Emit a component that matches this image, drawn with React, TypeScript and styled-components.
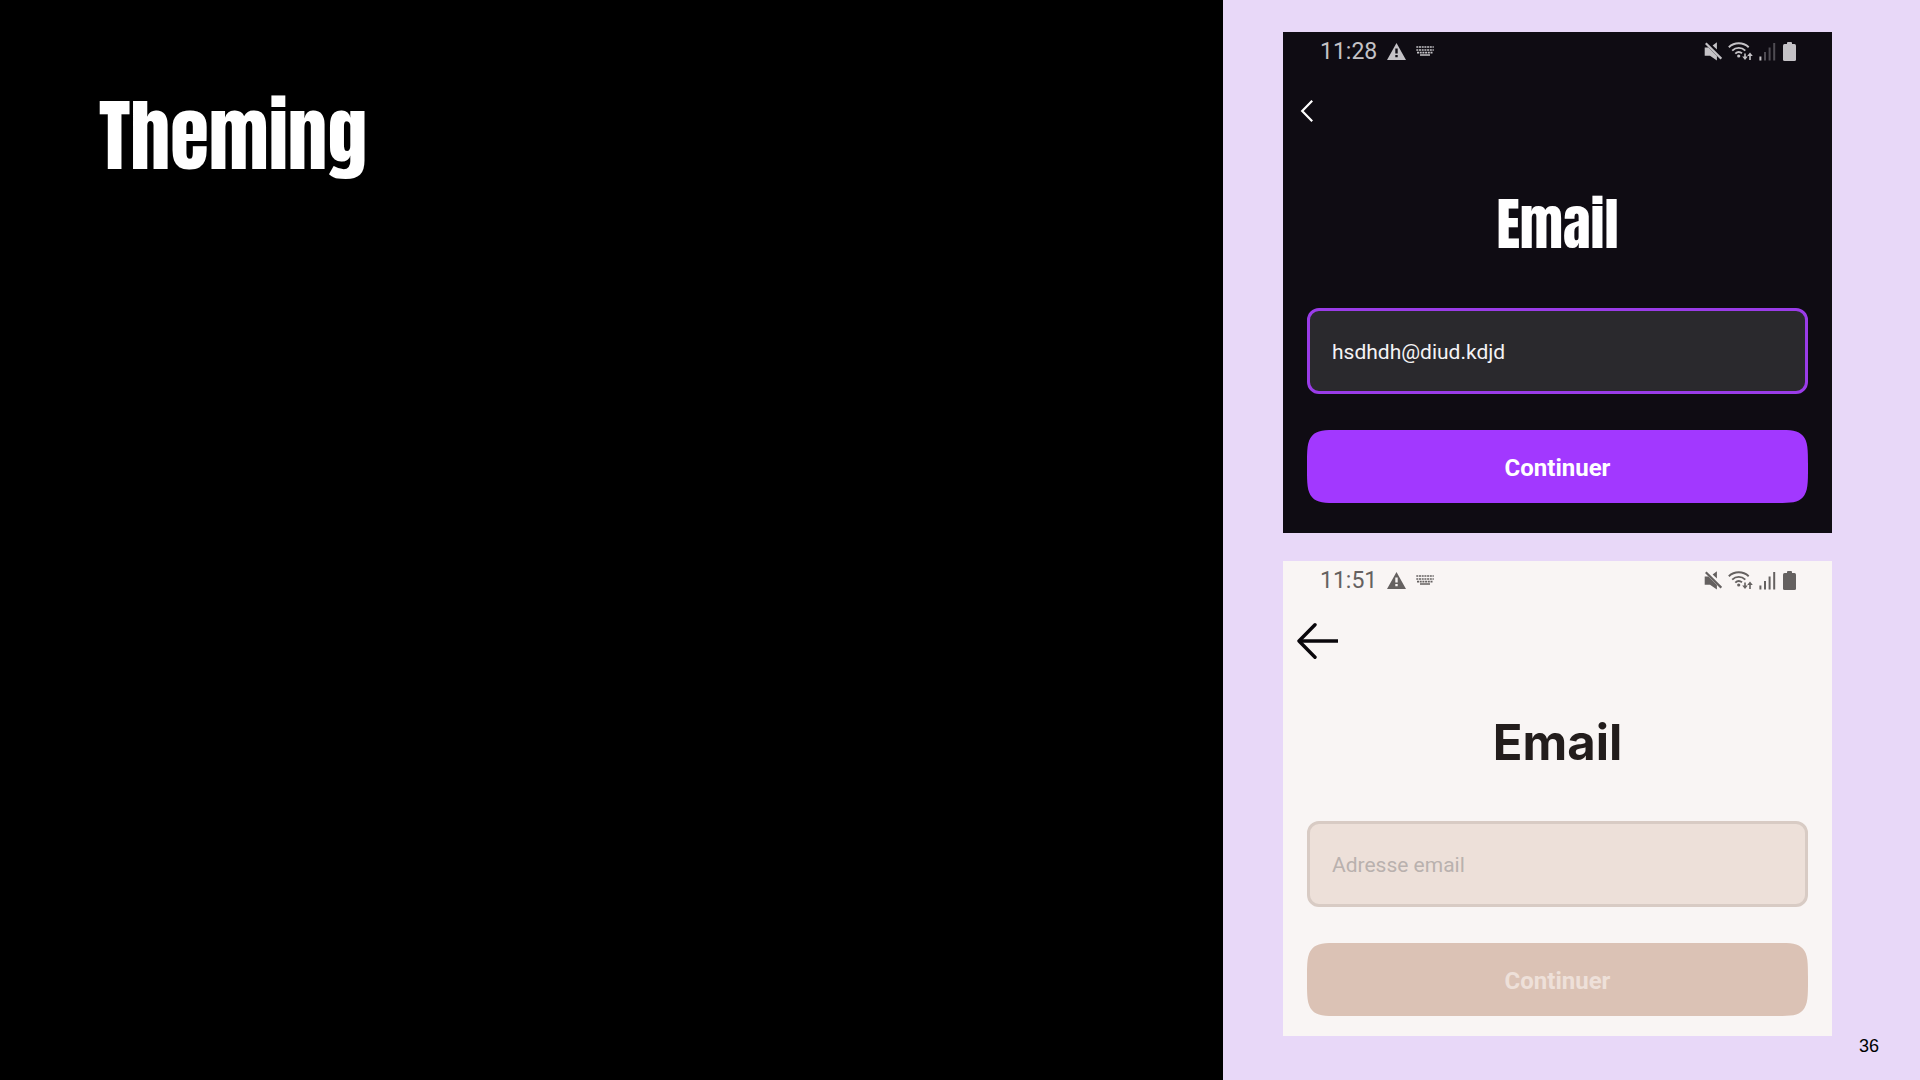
import React, { useId } from 'react';
import styled, { ThemeProvider, createGlobalStyle } from 'styled-components';

const GlobalStyle = createGlobalStyle`
  *, *::before, *::after { box-sizing: border-box; }
  body { margin: 0; background: #000; font-family: Roboto, "Liberation Sans", sans-serif; }
`;

const displayFont = 'Anton, "Roboto Condensed", Roboto, sans-serif';

const dark = {
  surface: '#0f0c13',
  status: '#c4c2c6',
  signalOff: '#4f4c53',
  nav: '#ffffff',
  title: '#ffffff',
  titleFont: displayFont,
  titleSize: '57px',
  titleWeight: 400,
  titleMargin: '32px 0 44px',
  field: '#2a292d',
  fieldBorder: '#9a3ce8',
  fieldText: '#f4f3f5',
  placeholder: '#8b8890',
  button: '#a238ff',
  buttonText: '#ffffff',
  bottom: '30px',
};

const light: typeof dark = {
  surface: '#f9f5f4',
  status: '#656160',
  signalOff: '#656160',
  nav: '#0a070b',
  title: '#231d1c',
  titleFont: 'Inter, Roboto, sans-serif',
  titleSize: '49px',
  titleWeight: 700,
  titleMargin: '22px 0 38px',
  field: '#ede0d9',
  fieldBorder: '#d8cbc4',
  fieldText: '#231d1c',
  placeholder: '#b9b1ae',
  button: '#dbc2b5',
  buttonText: '#eee0d9',
  bottom: '20px',
};

const Slide = styled.div`
  display: grid;
  grid-template-columns: 1223fr 697fr;
  min-height: 100vh;
`;

const Main = styled.main`
  background: #000;
  padding: 78px 99px;
`;

const Heading = styled.h1`
  margin: 0;
  color: #fff;
  font: 400 79px/116px ${displayFont};
`;

const Aside = styled.aside`
  display: flex;
  flex-direction: column;
  background: #e8d8f8;
  padding-top: 32px;
`;

const Screens = styled.div`
  display: flex;
  flex-direction: column;
  gap: 28px;
  padding: 0 88px 0 60px;
`;

const PageNumber = styled.footer`
  padding-right: 41px;
  color: #000;
  font: 18px/20px "Liberation Sans", Arial, sans-serif;
  text-align: right;
`;

const Screen = styled.section`
  position: relative;
  display: flex;
  flex-direction: column;
  background: ${p => p.theme.surface};
  padding-bottom: ${p => p.theme.bottom};
`;

const StatusBar = styled.div`
  display: flex;
  align-items: center;
  justify-content: space-between;
  height: 38px;
  padding: 0 36px 0 37px;
  color: ${p => p.theme.status};
  font-size: 23px;
  line-height: 28px;
`;

const StatusGroup = styled.div<{ $gap: number }>`
  display: flex;
  align-items: center;
  gap: ${p => p.$gap}px;

  svg { display: block; }
`;

const Clock = styled.time`
  padding-top: 2px;
`;

const Nav = styled.nav`
  display: flex;
  align-items: center;
  height: 82px;
  padding-left: 12px;
`;

const BackButton = styled.button`
  display: flex;
  padding: 0;
  border: 0;
  background: none;
  color: ${p => p.theme.nav};
  cursor: pointer;
`;

const Title = styled.h2`
  margin: ${p => p.theme.titleMargin};
  color: ${p => p.theme.title};
  font-family: ${p => p.theme.titleFont};
  font-size: ${p => p.theme.titleSize};
  font-weight: ${p => p.theme.titleWeight};
  line-height: 80px;
  text-align: center;
`;

const Form = styled.form`
  display: flex;
  flex-direction: column;
  gap: 36px;
  padding: 0 24px;
`;

const HiddenLabel = styled.label`
  position: absolute;
  width: 1px;
  height: 1px;
  overflow: hidden;
  white-space: nowrap;
  clip-path: inset(50%);
`;

const Field = styled.input`
  width: 100%;
  height: 86px;
  padding: 2px 22px 0;
  border: 3px solid ${p => p.theme.fieldBorder};
  border-radius: 12px;
  outline: 0;
  background: ${p => p.theme.field};
  color: ${p => p.theme.fieldText};
  font: 21px/28px Roboto, sans-serif;

  &::placeholder { color: ${p => p.theme.placeholder}; opacity: 1; }
`;

const Submit = styled.button`
  height: 73px;
  padding: 2px 0 0;
  border: 0;
  border-radius: 32px / 36px;
  corner-shape: squircle;
  background: ${p => p.theme.button};
  color: ${p => p.theme.buttonText};
  font: 700 24px/28px Roboto, sans-serif;
`;

const Warning = () => (
  <svg width="19" height="17" viewBox="0 0 19 17" aria-hidden="true">
    <path fillRule="evenodd" fill="currentColor" d="M9.5 0 19 17H0ZM8.3 5.5v5h2.4v-5ZM8.3 12v2.3h2.4V12Z" />
  </svg>
);

const Keyboard = () => (
  <svg width="18" height="10" viewBox="0 0 18 10" stroke="currentColor" aria-hidden="true">
    <path strokeWidth="1.6" strokeDasharray="2 .7" d="M.3 1H17.8M.3 4H17.8" />
    <path strokeWidth="1.6" strokeDasharray="2 .7" d="M1 6.6H17" />
    <path strokeWidth="1.5" d="M4 9H14" />
  </svg>
);

const Muted = () => (
  <svg width="18" height="19" viewBox="0 0 18 19" aria-hidden="true">
    <path fill="currentColor" d="M.7 5.6H4.4L12.9 14V18.4L6 13.800H.7ZM8.600 3.400 12.900.3V7.600Z" />
    <path stroke="currentColor" strokeWidth="2.200" d="M1.8 1.2 17.3 16.6" />
  </svg>
);

const Wifi = () => (
  <svg width="25" height="19" viewBox="0 0 25 19" fill="none" stroke="currentColor" aria-hidden="true">
    <path strokeWidth="1.9" d="M.8 5.2C6.5 0 15 0 20.7 5.2M4.2 8.6C8 5 13.5 5 17.3 8.6M7.3 11.6C9.3 9.6 12 9.6 14 11.2" />
    <circle cx="10.7" cy="14" r="1.6" fill="currentColor" stroke="none" />
    <path strokeWidth="1.6" d="M17 11.5V16M22 18V12.5" />
    <path fill="currentColor" stroke="none" d="M14.2 14.4H19.8L17 18ZM19.2 14H24.8L22 10.5Z" />
  </svg>
);

const SignalOff = styled.path`
  fill: ${p => p.theme.signalOff};
`;

const Signal = () => (
  <svg width="18" height="19" viewBox="0 0 18 19" aria-hidden="true">
    <path fill="currentColor" d="M.4 14.5h2v4h-2Z" />
    <SignalOff d="M5 10h2v8.5h-2ZM9.6 5.5h2v13h-2ZM14.2 1h2v17.5h-2Z" />
  </svg>
);

const Battery = () => (
  <svg width="13" height="19" viewBox="0 0 13 19" fill="currentColor" aria-hidden="true">
    <rect y="2" width="13" height="17" rx="1.5" />
    <rect x="4" width="5" height="4" rx="1" />
  </svg>
);

const Chevron = () => (
  <svg width="24" height="24" viewBox="0 0 24 24" fill="none" stroke="currentColor" strokeWidth="2.2" aria-hidden="true">
    <path d="M17.2 1.8 7.2 12 17.2 22.2" />
  </svg>
);

const Arrow = () => (
  <svg width="46" height="38" viewBox="0 0 46 38" fill="none" stroke="currentColor" strokeWidth="3.4" aria-hidden="true">
    <path strokeLinecap="round" strokeLinejoin="round" d="M20 3.8 4 20 20 36.2" />
    <path d="M4 20H43" />
  </svg>
);

interface EmailScreenProps {
  theme: typeof dark;
  time: string;
  value?: string;
  backIcon: React.ReactNode;
}

function EmailScreen({ theme, time, value, backIcon }: EmailScreenProps) {
  const id = useId();
  return (
    <ThemeProvider theme={theme}>
      <Screen>
        <StatusBar>
          <StatusGroup $gap={10}>
            <Clock>{time}</Clock>
            <Warning />
            <Keyboard />
          </StatusGroup>
          <StatusGroup $gap={6}>
            <Muted />
            <Wifi />
            <Signal />
            <Battery />
          </StatusGroup>
        </StatusBar>
        <Nav>
          <BackButton type="button" aria-label="Retour">{backIcon}</BackButton>
        </Nav>
        <Title id={id + 'title'}>Email</Title>
        <Form onSubmit={e => e.preventDefault()}>
          <HiddenLabel htmlFor={id}>Adresse email</HiddenLabel>
          <Field id={id} type="text" placeholder="Adresse email" defaultValue={value} />
          <Submit type="submit">Continuer</Submit>
        </Form>
      </Screen>
    </ThemeProvider>
  );
}

export default function App() {
  return (
    <>
      <GlobalStyle />
      <Slide>
        <Main>
          <Heading>Theming</Heading>
        </Main>
        <Aside>
          <Screens>
            <EmailScreen theme={dark} time="11:28" value="hsdhdh@diud.kdjd" backIcon={<Chevron />} />
            <EmailScreen theme={light} time="11:51" backIcon={<Arrow />} />
          </Screens>
          <PageNumber>36</PageNumber>
        </Aside>
      </Slide>
    </>
  );
}
